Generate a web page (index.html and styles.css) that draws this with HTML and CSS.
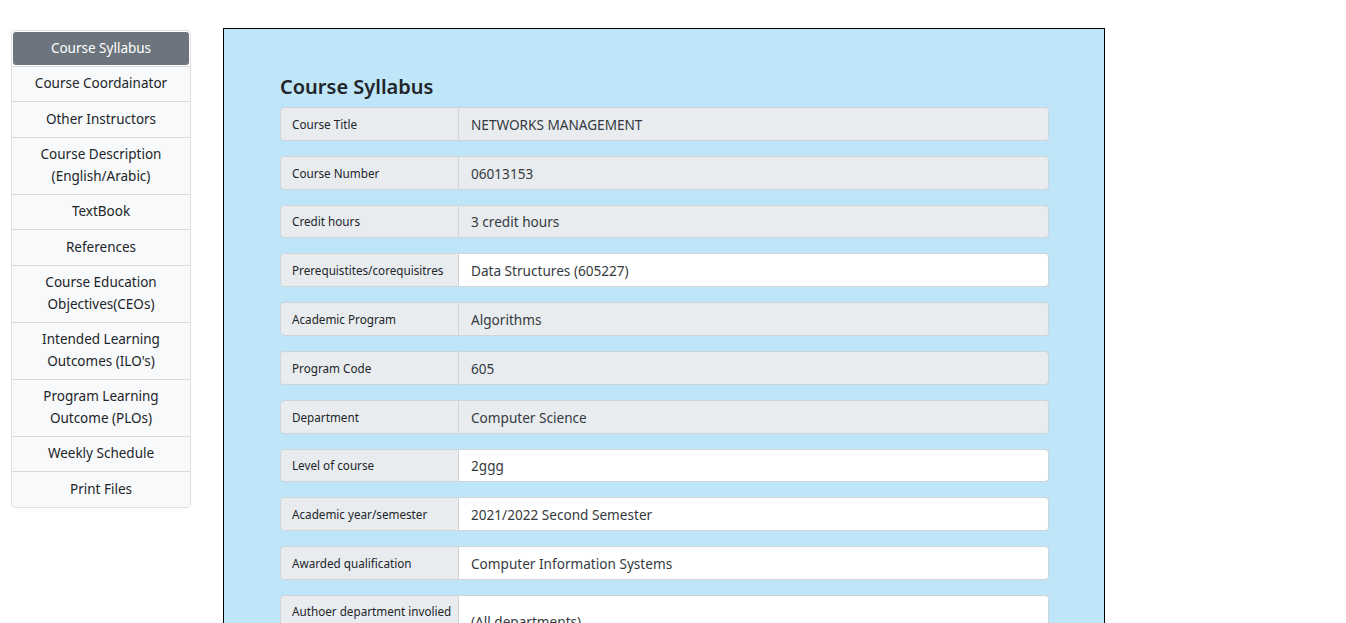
FILE: index.html
```html
<!DOCTYPE html>
<html>
<head>
<meta charset="utf-8">
<link rel="stylesheet" href="styles.css">
</head>
<body>
<div class="page">
  <nav class="side">
    <a class="item active">Course Syllabus</a>
    <a class="item">Course Coordainator</a>
    <a class="item">Other Instructors</a>
    <a class="item">Course Description (English/Arabic)</a>
    <a class="item">TextBook</a>
    <a class="item">References</a>
    <a class="item">Course Education Objectives(CEOs)</a>
    <a class="item">Intended Learning Outcomes (ILO's)</a>
    <a class="item">Program Learning Outcome (PLOs)</a>
    <a class="item">Weekly Schedule</a>
    <a class="item">Print Files</a>
  </nav>
  <main class="panel">
    <h4 class="title">Course Syllabus</h4>
    <div class="rows">
      <div class="row"><div class="lbl">Course Title</div><div class="val ro">NETWORKS MANAGEMENT</div></div>
      <div class="row"><div class="lbl">Course Number</div><div class="val ro">06013153</div></div>
      <div class="row"><div class="lbl">Credit hours</div><div class="val ro">3 credit hours</div></div>
      <div class="row"><div class="lbl">Prerequistites/corequisitres</div><div class="val">Data Structures (605227)</div></div>
      <div class="row"><div class="lbl">Academic Program</div><div class="val ro">Algorithms</div></div>
      <div class="row"><div class="lbl">Program Code</div><div class="val ro">605</div></div>
      <div class="row"><div class="lbl">Department</div><div class="val ro">Computer Science</div></div>
      <div class="row"><div class="lbl">Level of course</div><div class="val">2ggg</div></div>
      <div class="row"><div class="lbl">Academic year/semester</div><div class="val">2021/2022 Second Semester</div></div>
      <div class="row"><div class="lbl">Awarded qualification</div><div class="val">Computer Information Systems</div></div>
      <div class="row"><div class="lbl">Authoer department involied in teaching</div><div class="val">(All departments)</div></div>
    </div>
  </main>
</div>
</body>
</html>
```
FILE: styles.css
```css
*, *::before, *::after { box-sizing: border-box; }
html, body {
  margin: 0;
  padding: 0;
  background: #fff;
  font-family: "Noto Sans", "Open Sans", sans-serif;
  color: #212529;
}
.page {
  display: flex;
  align-items: flex-start;
  padding: 28px 0 0 11px;
}
.side {
  width: 180px;
  margin-top: 2px;
  display: flex;
  flex-direction: column;
  border: 1px solid rgba(0,0,0,.125);
  border-radius: 4px;
  overflow: hidden;
  flex-shrink: 0;
}
.item {
  display: block;
  background: #f8f9fa;
  color: #212529;
  font-size: 13.5px;
  line-height: 21.5px;
  padding: 6.5px 8px;
  text-align: center;
  border-top: 1px solid rgba(0,0,0,.125);
}
.item:first-child { border-top: 0; }
.item.active {
  background: #6c757d;
  color: #fff;
  margin: 1px;
  border-radius: 3px;
  padding: 5.5px 8px;
}
.panel {
  margin-left: 32px;
  width: 882px;
  border: 1px solid #000;
  background: #bee6f8;
  padding: 39px 56px 40px 56px;
  min-height: 700px;
}
.title {
  margin: 0 0 1px 0;
  font-size: 20px;
  font-weight: 600;
  line-height: 38px;
  color: #212529;
}
.rows {
  display: flex;
  flex-direction: column;
  gap: 15px;
  width: 769px;
}
.row {
  display: flex;
  align-items: stretch;
  min-height: 33.8px;
}
.lbl {
  width: 179px;
  flex-shrink: 0;
  background: #e9ecef;
  border: 1px solid #ced4da;
  border-radius: 4px 0 0 4px;
  font-size: 11.7px;
  line-height: 20px;
  padding: 5px 4px 5px 11px;
  display: flex;
  align-items: center;
  color: #212529;
}
.val {
  flex: 1;
  background: #fff;
  border: 1px solid #ced4da;
  border-left: 0;
  border-radius: 0 4px 4px 0;
  font-size: 13.6px;
  padding: 1px 11px 0 12px;
  display: flex;
  align-items: center;
  color: #343a40;
}
.val.ro { background: #e9ecef; }
```
